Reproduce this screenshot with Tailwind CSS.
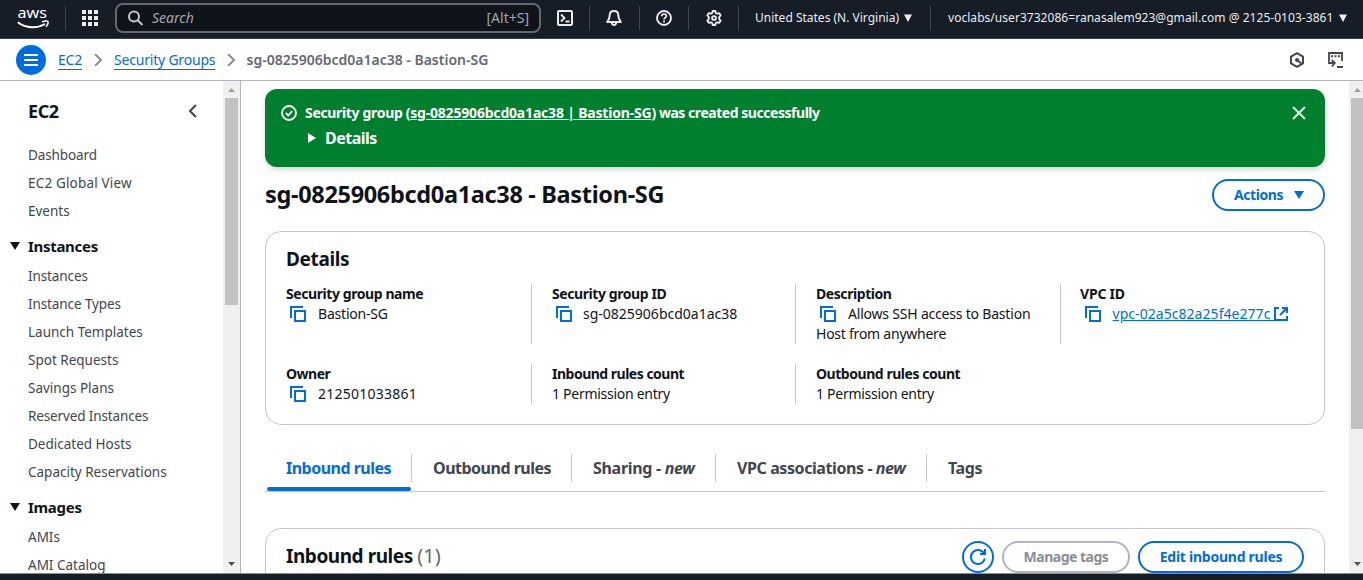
<!DOCTYPE html>
<html lang="en">
<head>
<meta charset="utf-8">
<title>Security group details | EC2</title>
<script src="https://cdn.jsdelivr.net/npm/@tailwindcss/browser@4"></script>
</head>
<body class="w-[1363px] h-[580px] overflow-hidden flex flex-col bg-white font-['Noto_Sans',sans-serif] text-[14px] leading-5 text-[#0f141a] whitespace-nowrap">
<svg class="hidden">
  <symbol id="copy" viewBox="0 0 16 16"><path d="M1 12V1h12M5 5h10v10H5z" fill="none" stroke="#006ce0" stroke-width="2"/></symbol>
</svg>

<!-- Global navigation -->
<header class="h-[39px] shrink-0 bg-[#161d26] border-b border-[#3a3f4a] flex text-[#ebebf0] text-[12px]">
  <div class="w-[65px] pl-[17px] pt-[3px]">
    <svg class="w-[32px] h-[26px]" viewBox="0 -5 32 26" fill="none">
      <text x="0.5" y="10.4" font-family="Noto Sans" font-size="15" textLength="29.500" lengthAdjust="spacingAndGlyphs" fill="#fff">aws</text>
      <path d="M.8 14.200C9 20.600 20.500 20.500 28 16" stroke="#fff" stroke-width="1.900"/>
      <path d="M25 13.800c3-.9 5.700-.9 6 0 .3 1.200-.7 3.600-2 5" stroke="#fff" stroke-width="1.500"/>
    </svg>
  </div>
  <div class="w-px h-6 mt-[6px] bg-[#424650]"></div>
  <div class="w-[49px] pl-[16px] pt-[10px]">
    <svg class="w-4 h-4" viewBox="0 0 16 16" fill="#ebebf0"><path d="M0 0h4v4H0zM6 0h4v4H6zM12 0h4v4h-4zM0 6h4v4H0zM6 6h4v4H6zM12 6h4v4h-4zM0 12h4v4H0zM6 12h4v4H6zM12 12h4v4h-4z"/></svg>
  </div>
  <div class="w-[426px] h-[30px] mt-[3px] rounded-lg border-2 border-[#656871] bg-[#0f141a] flex items-center pl-[11px] pr-[10px] text-[14px] text-[#a4a4ad]">
    <svg class="w-4 h-4 mr-[8px]" viewBox="0 0 16 16" fill="none" stroke="#c6c6cd" stroke-width="2"><circle cx="6" cy="6.500" r="5"/><path d="M9.700 10.300 14.500 15"/></svg>
    <span class="italic">Search</span>
    <span class="ml-auto">[Alt+S]</span>
  </div>
  <div class="w-[48px] pl-[16px] pt-[10px]"><svg class="w-4 h-4" viewBox="0 0 16 16" fill="none" stroke="#ebebf0" stroke-width="2"><rect x="1" y="1" width="14" height="14" rx="1"/><path d="m4 4.500 3.500 3.500L4 11.500M8.500 11.500h4" stroke-width="1.800"/></svg></div>
  <div class="w-px h-6 mt-[6px] bg-[#424650]"></div>
  <div class="w-[49px] pl-[16px] pt-[10px]"><svg class="w-4 h-4" viewBox="0 0 16 16" fill="none" stroke="#ebebf0" stroke-width="2" stroke-linejoin="round"><path d="M8 1C5.200 1 3.700 3 3.700 5.200c0 3-.7 4.500-2.500 6.800h13.600c-1.800-2.300-2.500-3.800-2.500-6.800C12.300 3 10.800 1 8 1zM5.800 12.500c.2 3.300 4.200 3.300 4.400 0"/></svg></div>
  <div class="w-px h-6 mt-[6px] bg-[#424650]"></div>
  <div class="w-[48px] pl-[16px] pt-[10px]"><svg class="w-4 h-4" viewBox="0 0 16 16" fill="none" stroke="#ebebf0" stroke-width="1.900"><circle cx="8" cy="8" r="7"/><path d="M5.700 6.300c0-3 4.700-3 4.700-.3C10.400 7.800 8 7.600 8 9.600M8 10.600v1.900" stroke-width="1.700"/></svg></div>
  <div class="w-px h-6 mt-[6px] bg-[#424650]"></div>
  <div class="w-[49px] pl-[17px] pt-[10px]"><svg class="w-4 h-4" viewBox="0 0 16 16" fill="none" stroke="#ebebf0" stroke-width="1.900" stroke-linejoin="round"><path d="M6.700 1h2.600l.5 2 1.300.7 2-.6 1.500 2.200L13.200 7v2l1.400 1.700-1.500 2.200-2-.6-1.300.7-.5 2H6.700l-.5-2-1.300-.7-2 .6-1.500-2.200L2.800 9V7L1.400 5.300l1.500-2.200 2 .6L6.200 3z"/><circle cx="8" cy="8" r="1.900"/></svg></div>
  <div class="w-px h-6 mt-[6px] bg-[#424650]"></div>
  <div class="w-[191px] pl-[16px] pt-[8px] flex">
    <span>United States (N. Virginia)</span>
    <svg class="w-2 h-2 ml-auto mr-[18px] mt-[6px]" viewBox="0 0 8 8"><path d="M0 .5h8L4 8z" fill="#ebebf0"/></svg>
  </div>
  <div class="w-px h-6 mt-[6px] bg-[#424650]"></div>
  <div class="flex-1 pl-[17px] pt-[8px] flex">
    <span class="tracking-[0.04px]">voclabs/user3732086=ranasalem923@gmail.com @ 2125-0103-3861</span>
    <svg class="w-2 h-2 ml-auto mr-[16px] mt-[6px]" viewBox="0 0 8 8"><path d="M0 .5h8L4 8z" fill="#ebebf0"/></svg>
  </div>
</header>

<!-- Breadcrumbs -->
<nav class="h-[42px] shrink-0 border-b border-[#b4b4bb] flex items-center pl-4 text-[#006ce0]">
  <div class="w-[30px] h-[30px] rounded-full bg-[#006ce0] flex flex-col justify-center items-center gap-[3px]">
    <i class="w-[14px] h-[2px] bg-white"></i><i class="w-[14px] h-[2px] bg-white"></i><i class="w-[14px] h-[2px] bg-white"></i>
  </div>
  <div class="w-[48px] pl-3 flex"><span class="border-b border-[#006ce0] leading-[19px] tracking-[-0.2px]">EC2</span></div>
  <svg class="w-2 h-3 mr-[12px]" viewBox="0 0 8 12"><path d="m1 0 6 6-6 6" fill="none" stroke="#8c8c94" stroke-width="2"/></svg>
  <div class="w-[113px] flex"><span class="border-b border-[#006ce0] leading-[19px] tracking-[-0.2px]">Security Groups</span></div>
  <svg class="w-2 h-3" viewBox="0 0 8 12"><path d="m1 0 6 6-6 6" fill="none" stroke="#8c8c94" stroke-width="2"/></svg>
  <span class="ml-[11.500px] font-semibold text-[#656871]">sg-0825906bcd0a1ac38 - Bastion-SG</span>
  <svg class="w-4 h-4 ml-auto mr-[22px]" viewBox="0 0 16 16" fill="none" stroke="#424650" stroke-width="2"><path d="M8 1.200 14 4.600v6.800L8 14.800 2 11.400V4.600z" stroke-linejoin="round"/><circle cx="8" cy="8" r="2" fill="#424650" stroke="none"/><path d="m8 8 4.500 3.500"/></svg>
  <svg class="w-4 h-4 mr-5" viewBox="0 0 16 16" fill="none" stroke="#424650" stroke-width="1.800"><path d="M7 11H2V1h13v8M4.800 8l3 3-3 3.500M10 15h6"/><path d="M4 4.300h2M7.500 4.300h2M11 4.300h2" stroke-width="2"/></svg>
</nav>

<div class="h-[492px] shrink-0 flex overflow-hidden">
  <!-- Side navigation -->
  <aside class="w-[223px] h-full overflow-hidden pl-[28px] text-[#424650] text-[13.5px] shrink-0">
    <div class="h-[60px] pt-5 flex items-start">
      <h2 class="text-[18px] font-bold tracking-[-0.4px] text-[#0f141a]">EC2</h2>
      <svg class="w-2 h-[14px] ml-auto mr-[26px] mt-[3px]" viewBox="0 0 8 14"><path d="m7 1-6 6 6 6" fill="none" stroke="#424650" stroke-width="2"/></svg>
    </div>
    <ul class="leading-7">
      <li class="tracking-[-0.1px]">Dashboard</li><li class="tracking-[0.17px]">EC2 Global View</li><li>Events</li>
    </ul>
    <h3 class="flex items-center h-7 mt-[7px] mb-[2px] -ml-[18px] text-[15px] font-bold tracking-[-0.3px] text-[#0f141a]"><svg class="w-[10px] h-2 mr-2" viewBox="0 0 10 8"><path d="M0 0h10L5 8z" fill="#0f141a"/></svg>Instances</h3>
    <ul class="leading-7">
      <li class="tracking-[-0.1px]">Instances</li><li class="tracking-[-0.1px]">Instance Types</li><li>Launch Templates</li><li>Spot Requests</li><li>Savings Plans</li><li class="tracking-[-0.13px]">Reserved Instances</li><li>Dedicated Hosts</li><li>Capacity Reservations</li>
    </ul>
    <h3 class="flex items-center h-7 mt-[7px] mb-[2px] -ml-[18px] text-[15px] font-bold tracking-[-0.3px] text-[#0f141a]"><svg class="w-[10px] h-2 mr-2" viewBox="0 0 10 8"><path d="M0 0h10L5 8z" fill="#0f141a"/></svg>Images</h3>
    <ul class="leading-7">
      <li>AMIs</li><li>AMI Catalog</li>
    </ul>
  </aside>
  <div class="w-[18px] shrink-0 bg-[#f0f0f0] border-r border-[#b4b4bb] flex flex-col items-center">
    <svg class="w-[7px] h-1 mt-[7px] mb-[6px] shrink-0" viewBox="0 0 7 4"><path d="M0 4h7L3.500 0z" fill="#a0a0a0"/></svg>
    <div class="w-[13px] h-[207px] bg-[#c1c1c1]"></div>
    <svg class="w-[7px] h-1 mt-auto mb-[7px]" viewBox="0 0 7 4"><path d="M0 0h7L3.500 4z" fill="#505050"/></svg>
  </div>

  <!-- Page content -->
  <main class="w-[1108px] h-full shrink-0 pl-6 pr-6 pt-2 overflow-hidden flex flex-col">
    <section class="h-[78px] shrink-0 rounded-xl bg-[#00802f] shadow-[0_3px_5px_#00000026] text-white font-bold pl-4 pr-[19px] pt-[14px]">
      <div class="flex items-center">
        <svg class="w-4 h-4 mr-2" viewBox="0 0 16 16" fill="none" stroke="#fff" stroke-width="1.800"><circle cx="8" cy="8" r="7"/><path d="m4.800 8 2.400 2.400 4-4.300"/></svg>
        <span class="text-[14px] tracking-[-0.33px]">Security group (<span class="underline tracking-[-0.19px]">sg-0825906bcd0a1ac38 | Bastion-SG</span><span class="tracking-[-0.46px]">) was created successfully</span></span>
        <svg class="w-[14px] h-[14px] ml-auto" viewBox="0 0 14 14"><path d="m1 1 12 12M13 1 1 13" fill="none" stroke="#e3f1e7" stroke-width="2"/></svg>
      </div>
      <div class="flex items-center pl-[27px] mt-[5px] text-[16px] tracking-[-0.5px]"><svg class="w-2 h-[10px] mr-[9px]" viewBox="0 0 8 10"><path d="M0 0v10l8-5z" fill="#fff"/></svg>Details</div>
    </section>

    <div class="h-8 shrink-0 mt-3 flex items-center justify-between">
      <h1 class="text-[23.5px] font-bold tracking-[-0.33px] pb-[2px]">sg-0825906bcd0a1ac38 - Bastion-SG</h1>
      <button class="w-[113px] h-8 rounded-full border-2 border-[#006ce0] text-[#006ce0] font-bold flex items-center pl-[20px] tracking-[-0.42px]">Actions<svg class="w-[10px] h-2 ml-auto mr-[19px]" viewBox="0 0 10 8"><path d="M0 0h10L5 8z" fill="#006ce0"/></svg></button>
    </div>

    <section class="h-[194px] shrink-0 mt-5 rounded-2xl border border-[#c6c6cd] px-5 pt-[17px]">
      <h2 class="text-[19px] font-bold leading-5 tracking-[-0.35px]">Details</h2>
      <div class="grid grid-cols-[246px_264px_265px_1fr] grid-rows-[60px_40px] gap-y-5 mt-[15px]">
        <div class="border-r border-[#c6c6cd]"><b class="block tracking-[-0.42px]">Security group name</b><div class="flex items-center tracking-[-0.2px]"><svg class="w-4 h-4 ml-1 mr-3"><use href="#copy"/></svg>Bastion-SG</div></div>
        <div class="border-r border-[#c6c6cd] pl-5"><b class="block tracking-[-0.42px]">Security group ID</b><div class="flex items-center"><svg class="w-4 h-4 ml-1 mr-[11px]"><use href="#copy"/></svg>sg-0825906bcd0a1ac38</div></div>
        <div class="border-r border-[#c6c6cd] pl-5"><b class="block tracking-[-0.43px]">Description</b><div class="flex items-center tracking-[-0.2px]"><svg class="w-4 h-4 ml-1 mr-3"><use href="#copy"/></svg>Allows SSH access to Bastion</div><div class="tracking-[-0.24px]">Host from anywhere</div></div>
        <div class="pl-[19px]"><b class="block tracking-[-0.2px]">VPC ID</b><div class="flex items-center text-[#006ce0]"><svg class="w-4 h-4 ml-[5px] mr-[11.500px]"><use href="#copy"/></svg><span class="underline tracking-[0.05px]">vpc-02a5c82a25f4e277c&nbsp;</span><svg class="w-[14px] h-[14px]" viewBox="0 0 14 14"><path d="M5 1H1v12h12V9M8 1h5v5M13 1 6 8" fill="none" stroke="#006ce0" stroke-width="2"/></svg></div></div>
        <div class="border-r border-[#c6c6cd]"><b class="block tracking-[-0.5px]">Owner</b><div class="flex items-center tracking-[0.24px]"><svg class="w-4 h-4 ml-1 mr-3"><use href="#copy"/></svg>212501033861</div></div>
        <div class="border-r border-[#c6c6cd] pl-5 tracking-[-0.28px]"><b class="block tracking-[-0.5px]">Inbound rules count</b>1 Permission entry</div>
        <div class="pl-5 tracking-[-0.28px]"><b class="block tracking-[-0.46px]">Outbound rules count</b>1 Permission entry</div>
      </div>
    </section>

    <div class="h-[39px] shrink-0 mt-7 border-b border-[#c6c6cd] flex text-[16px] font-bold text-[#424650]">
      <div class="w-[147px] pl-[2px] shrink-0 flex flex-col text-[#006ce0] tracking-[-0.52px]"><div class="h-[28px] mt-px border-r border-[#c6c6cd] pl-[19px] leading-[29px]">Inbound rules</div><div class="w-[144px] h-1 mt-[5px] rounded-full bg-[#006ce0]"></div></div>
      <div class="w-[160px] h-[28px] mt-px pl-[21px] leading-[29px] border-r border-[#c6c6cd] tracking-[-0.5px]">Outbound rules</div>
      <div class="w-[144px] h-[28px] mt-px pl-[21px] leading-[29px] border-r border-[#c6c6cd] tracking-[-0.3px]">Sharing - <i>new</i></div>
      <div class="w-[211px] h-[28px] mt-px pl-[21px] leading-[29px] border-r border-[#c6c6cd] tracking-[-0.41px]">VPC associations - <i>new</i></div>
      <div class="h-[28px] mt-px pl-[21px] leading-[29px] tracking-[-0.4px]">Tags</div>
    </div>

    <section class="h-[80px] shrink-0 mt-9 rounded-2xl border border-[#c6c6cd] pl-5 pr-5 pt-3 flex items-start">
      <h2 class="text-[19px] font-bold leading-[30px] tracking-[-0.45px]">Inbound rules <span class="font-normal text-[20px] tracking-normal text-[#656871]">(1)</span></h2>
      <div class="ml-auto flex gap-2 text-[#006ce0] font-bold">
        <div class="w-8 h-8 rounded-full border-2 border-[#006ce0] flex items-center justify-center"><svg class="w-4 h-4" viewBox="0 0 16 16" fill="none" stroke="#006ce0" stroke-width="2"><path d="M14.800 9.500A7 7 0 1 1 14 4.500M15 0v5h-5"/></svg></div>
        <button class="w-[128px] h-8 rounded-full border-2 border-[#b4b4bb] text-[#8c8c94] tracking-[-0.5px]">Manage tags</button>
        <button class="w-[166px] h-8 rounded-full border-2 border-[#006ce0] tracking-[-0.25px]">Edit inbound rules</button>
      </div>
    </section>
  </main>
  <div class="w-[17px] shrink-0 bg-[#f0f0f0] flex flex-col items-center">
    <svg class="w-[7px] h-1 mt-[7px] mb-[6px] shrink-0" viewBox="0 0 7 4"><path d="M0 4h7L3.500 0z" fill="#a0a0a0"/></svg>
    <div class="w-[13px] h-[331px] bg-[#c1c1c1]"></div>
    <svg class="w-[7px] h-1 mt-auto mb-[7px]" viewBox="0 0 7 4"><path d="M0 0h7L3.500 4z" fill="#505050"/></svg>
  </div>
</div>
<footer class="h-[7px] shrink-0 bg-[#161d26] border-t border-[#8c8c94]"></footer>
</body>
</html>
